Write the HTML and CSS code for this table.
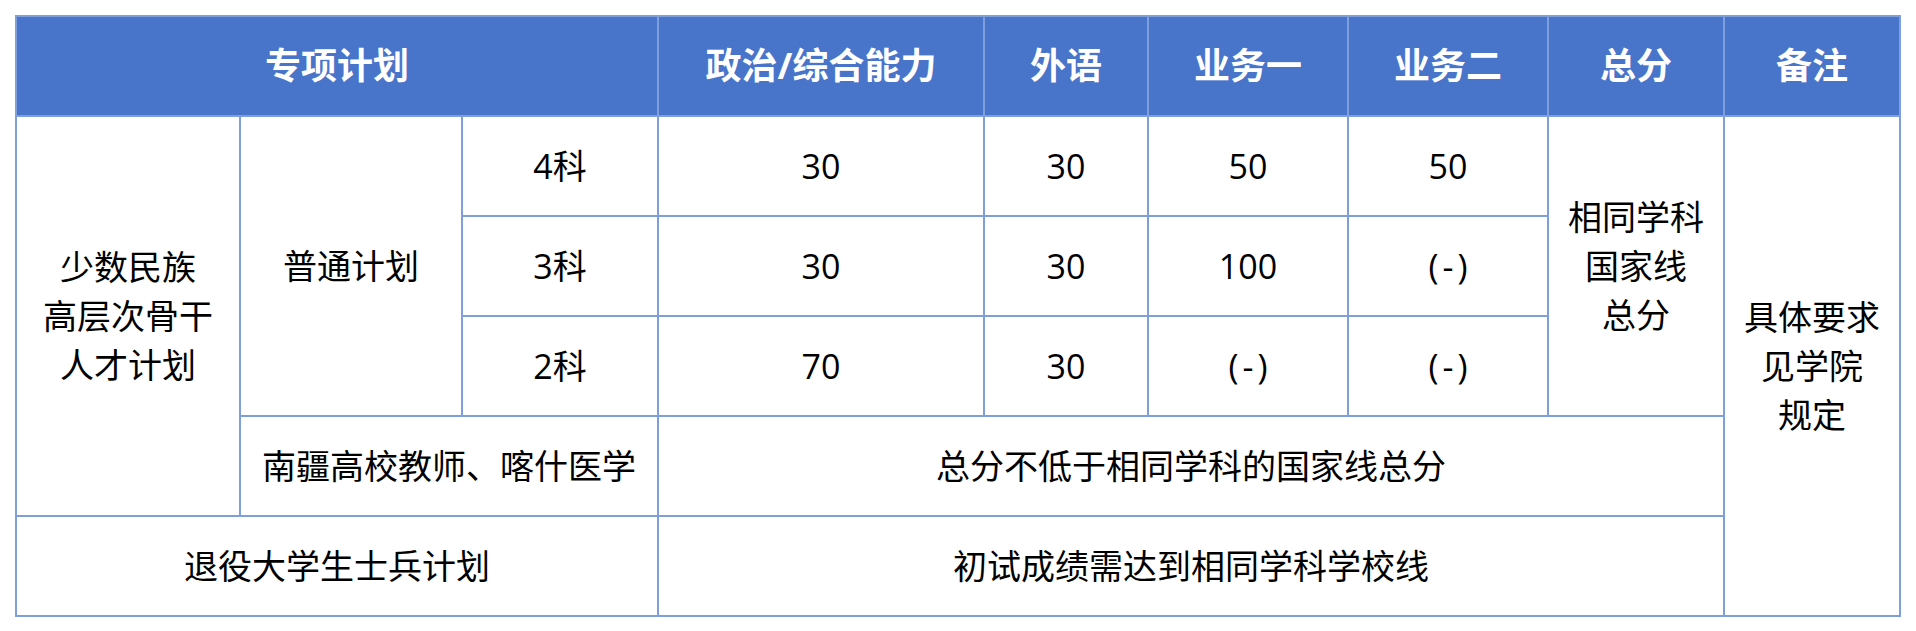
FILE: index.html
```html
<!DOCTYPE html>
<html lang="zh-CN">
<head>
<meta charset="utf-8">
<title>专项计划</title>
<link rel="stylesheet" href="styles.css">
</head>
<body>
<table class="score-table">
  <colgroup>
    <col class="c1"><col class="c2"><col class="c3"><col class="c4"><col class="c5"><col class="c6"><col class="c7"><col class="c8"><col class="c9">
  </colgroup>
  <thead>
    <tr>
      <th colspan="3">专项计划</th>
      <th>政治/综合能力</th>
      <th>外语</th>
      <th>业务一</th>
      <th>业务二</th>
      <th>总分</th>
      <th>备注</th>
    </tr>
  </thead>
  <tbody>
    <tr>
      <td rowspan="4" class="multi">少数民族<br>高层次骨干<br>人才计划</td>
      <td rowspan="3">普通计划</td>
      <td>4科</td>
      <td>30</td>
      <td>30</td>
      <td>50</td>
      <td>50</td>
      <td rowspan="3" class="multi">相同学科<br>国家线<br>总分</td>
      <td rowspan="5" class="multi">具体要求<br>见学院<br>规定</td>
    </tr>
    <tr>
      <td>3科</td>
      <td>30</td>
      <td>30</td>
      <td>100</td>
      <td><span class="dash">(-)</span></td>
    </tr>
    <tr>
      <td>2科</td>
      <td>70</td>
      <td>30</td>
      <td><span class="dash">(-)</span></td>
      <td><span class="dash">(-)</span></td>
    </tr>
    <tr>
      <td colspan="2">南疆高校教师、喀什医学</td>
      <td colspan="5">总分不低于相同学科的国家线总分</td>
    </tr>
    <tr>
      <td colspan="3">退役大学生士兵计划</td>
      <td colspan="5">初试成绩需达到相同学科学校线</td>
    </tr>
  </tbody>
</table>
</body>
</html>
```

FILE: styles.css
```css
html, body {
  margin: 0;
  padding: 0;
  background: #ffffff;
}

body {
  padding: 15px 0 0 15px;
  font-family: "Open Sans", "Noto Sans CJK SC", sans-serif;
  color: #000000;
}

.score-table {
  border-collapse: collapse;
  table-layout: fixed;
  width: 1886px;
}

.c1 { width: 224px; }
.c2 { width: 222px; }
.c3 { width: 196px; }
.c4 { width: 326px; }
.c5 { width: 164px; }
.c6 { width: 200px; }
.c7 { width: 200px; }
.c8 { width: 176px; }
.c9 { width: 176px; }

.score-table tr {
  height: 100px;
}

.score-table th,
.score-table td {
  border: 2px solid #7f9fdc;
  padding: 0;
  text-align: center;
  vertical-align: middle;
  white-space: nowrap;
}

.score-table th {
  background: #4874ca;
  color: #ffffff;
  font-size: 36px;
  font-weight: 700;
  line-height: 48px;
}

.score-table td {
  font-size: 34px;
  font-weight: 400;
  line-height: 48px;
}

.score-table td.multi {
  line-height: 49px;
}

.dash {
  letter-spacing: 4px;
  margin-left: 4px;
}
```
